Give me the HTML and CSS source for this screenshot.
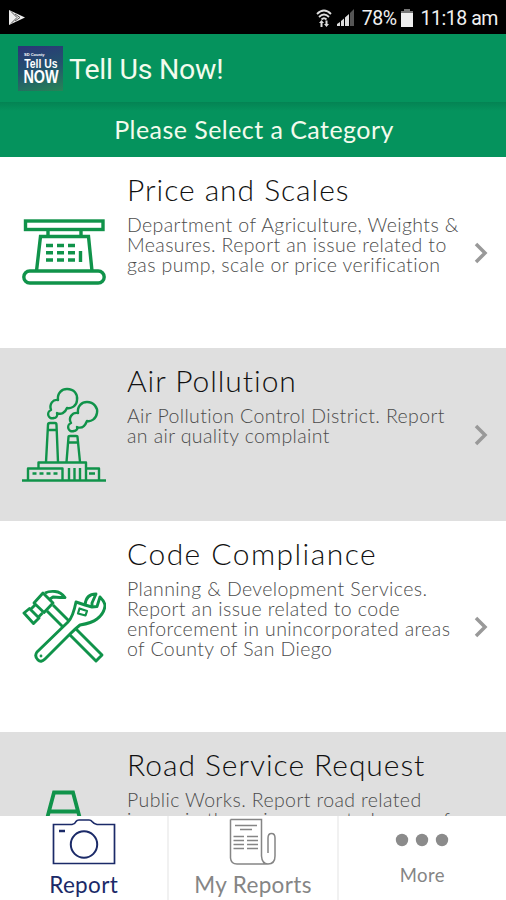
FILE: index.html
```
<!DOCTYPE html>
<html lang="en">
<head>
    <meta charset="UTF-8">
    <meta name="viewport" content="width=device-width, initial-scale=1.0">
    <title>Tell Us Now!</title>
    <link rel="stylesheet" href="styles.css">
</head>
<body>
    <div class="app">
        <div class="status-bar">
            <svg class="play" width="18" height="18" viewBox="0 0 18 18">
                <path d="M1 1 L17 8.5 L1 16 Z" fill="#eee"/>
                <path d="M3 2.500 L9 8.5 L3 14.500 M7 5 L12 8.500 L7 12" fill="none" stroke="#555" stroke-width="1"/>
            </svg>
            <svg class="wifi" width="16" height="19" viewBox="0 0 16 19">
                <g fill="none" stroke="#ddd" stroke-width="1.8">
                    <path d="M1 5 Q8 -2 15 5"/>
                    <path d="M3 8 Q8 3 13 8"/>
                    <path d="M5.5 10.5 Q8 8 10.5 10.5"/>
                </g>
                <path d="M3 14 L5.5 11 L8 14 H6.5 V18 H4.5 V14 Z M8 15 H9.5 V11.5 H11.5 V15 H13 L10.5 18 Z" fill="#ddd"/>
            </svg>
            <svg class="signal" width="18" height="18" viewBox="0 0 18 18">
                <path d="M0 17 V15 L3 13 V17 Z M4 17 V12 L7 9.500 V17 Z M8 17 V8.500 L12 5 V17 Z" fill="#ddd"/>
                <path d="M13 17 V4 L17 0 V17 Z" fill="#555"/>
            </svg>
            <span class="percent">78%</span>
            <svg class="battery" width="12" height="18" viewBox="0 0 12 18">
                <path d="M3 0 H9 V2 H12 V4 H0 V2 H3 Z" fill="#777"/>
                <path d="M0 4 H12 V18 H0 Z" fill="#eee"/>
            </svg>
            <span class="time">11:18 am</span>
        </div>

        <header class="header">
            <div class="logo">
                <span class="logo-small">SD County</span>
                <span class="logo-mid">Tell Us</span>
                <span class="logo-big">NOW</span>
            </div>
            <h1>Tell Us Now!</h1>
        </header>
        <div class="subheader">Please Select a Category</div>

        <ul class="categories">
            <li>
                <svg class="icon" width="84" height="96" viewBox="0 0 84 96">
                    <g fill="none" stroke="#10934a" stroke-width="3.400">
                        <rect x="3.500" y="16" width="77.500" height="8.500"/>
                        <path d="M26 25 V31 M59 25 V31"/>
                        <path d="M14.500 66 L18.500 31.500 H66.500 L70 66"/>
                        <rect x="1.800" y="66" width="80.400" height="12" rx="6"/>
                        <path d="M24 40.500 h7 m4 0 h7 m4 0 h7 M24 47.800 h7 m4 0 h7 m4 0 h7 M24 55 h7 m4 0 h7 m4 0 h7 M58.500 46 v11"/>
                    </g>
                </svg>
                <div class="text">
                    <h2>Price and Scales</h2>
                    <p>Department of Agriculture, Weights &amp;<br>Measures. Report an issue related to<br>gas pump, scale or price verification</p>
                </div>
                <svg class="arrow" width="14" height="22" viewBox="0 0 14 22"><path d="M2 2 L11 11 L2 20"/></svg>
            </li>
            <li>
                <svg class="icon" width="84" height="96" viewBox="0 0 84 96">
                    <g fill="none" stroke="#10934a" stroke-width="2.400" stroke-linejoin="round">
                        <path d="M0 93.500 H84"/>
                        <path d="M6 93 V81.500 H40.500 V93 M16.500 81 V75.500 H64 V93 M64 81.500 H77 V93"/>
                        <path d="M24 75 L26 38 Q26 36 28 36 H33 Q34.500 36 34.500 38 L36 75 M26 43 H34.500"/>
                        <path d="M44.500 75 L46.500 50 Q46.500 49 48 49 H54 Q55.500 49 55.500 50 L58 75 M46.500 55.500 H55.500"/>
                        <path d="M10.500 86.500 h4 m3 0 h4 m3 0 h4 m3 0 h4 M67 86.500 h6 M47 81 V93 M52.500 81 V93 M58 81 V93"/>
                        <path d="M32 31 C26 33 24 25 29 23 C27 17 31 12 36 13 C35 6 40 2 45 2 C52 2 56 7 55 13 C55 19 49 22 45 21 C43 26 39 28 35 26 C36 29 34 31 32 31 Z"/>
                        <path d="M52 44 C46 46 44 38 49 36 C46 31 50 25 56 26 C55 19 60 15 65 15 C72 15 76 21 75 26 C74 32 69 35 65 34 C63 39 60 42 55 40 C56 42 54 44 52 44 Z"/>
                    </g>
                </svg>
                <div class="text">
                    <h2>Air Pollution</h2>
                    <p>Air Pollution Control District. Report<br>an air quality complaint</p>
                </div>
                <svg class="arrow" width="14" height="22" viewBox="0 0 14 22"><path d="M2 2 L11 11 L2 20"/></svg>
            </li>
            <li>
                <svg class="icon" width="84" height="96" viewBox="0 0 84 96">
                    <g fill="none" stroke="#10934a" stroke-width="2.900" stroke-linejoin="round">
                        <!-- hammer -->
                        <path d="M31 26 L47 42 M25 32 L41 48 M54 50 L80 76 L74 82 L47 55"/>
                        <path d="M21 14 L31 24 L22 33.500 L12 24 Z"/>
                        <path d="M23 14 Q27 12 33 12.500 Q39 13 43 18.500 H38 L31 18 L28 20"/>
                        <path d="M2 34 L7.500 29.500 L17 39 L11.500 44.500 Z M9 30 L13 26 M16.500 38 L20.500 34"/>
                        <!-- wrench -->
                        <path d="M15 73 L46 43 Q51 38 54 23 L63 26 L70 28 L75 27.500 L78 18 Q83 23 83 27 Q82 35 75 40 Q70 44 58 46 Q53 50 48 55 L23 80 Q19 84 16 81 Q12 77 15 73 Z"/>
                        <path d="M63 26 Q64 15 74 15 L70 24 V28"/>
                        <path d="M57.500 29.500 L65 32 L63.500 36.500 L56 34.500 Z" stroke-width="2.200"/>
                        <circle cx="19" cy="77" r="0.800" stroke-width="1.200"/>
                    </g>
                </svg>
                <div class="text">
                    <h2 class="wide">Code Compliance</h2>
                    <p>Planning &amp; Development Services.<br>Report an issue related to code<br>enforcement in unincorporated areas<br>of County of San Diego</p>
                </div>
                <svg class="arrow" width="14" height="22" viewBox="0 0 14 22"><path d="M2 2 L11 11 L2 20"/></svg>
            </li>
            <li>
                <svg class="icon" width="84" height="96" viewBox="0 0 84 96">
                    <g fill="none" stroke="#10934a" stroke-width="3.800">
                        <path d="M22 50 L32 12.500 H51 L61 50 M27 31.500 H56"/>
                        <path d="M2 84 H82 M12 84 L22 50 H61 L71 84"/>
                    </g>
                </svg>
                <div class="text">
                    <h2>Road Service Request</h2>
                    <p>Public Works. Report road related<br>issues in the unincorporated areas of<br>County of San Diego</p>
                </div>
                <svg class="arrow" width="14" height="22" viewBox="0 0 14 22"><path d="M2 2 L11 11 L2 20"/></svg>
            </li>
        </ul>

        <nav class="tabs">
            <a class="tab active">
                <svg width="64" height="48" viewBox="0 0 64 48">
                    <g fill="none" stroke="#1b2a68" stroke-width="1.700">
                        <path d="M1.500 6.500 H20 Q23 6 24 3.500 Q25 2 27 2 H37 Q39 2 40 3.500 Q42 6 45 6.500 H62.500 V45.500 H1.500 Z"/>
                        <circle cx="32" cy="26.500" r="13.200" stroke-width="2"/>
                        <path d="M7 13 H13" stroke-width="2.500"/>
                    </g>
                </svg>
                <span>Report</span>
            </a>
            <a class="tab">
                <svg width="48" height="48" viewBox="0 0 48 48">
                    <g fill="none" stroke="#858585" stroke-width="1.500">
                        <path d="M1.500 1.500 H32.500 V38 Q33 46 39 46 Q46 46 46 38 V20 Q46 15.500 42.500 15.500 Q39 15.500 39 20 V35 M1.500 1.500 V40 Q2 46 8 46 H39"/>
                        <path d="M6 7.500 H28 M11 11.500 H23 M4.500 18.500 H15 M4.500 22.500 H15 M4.500 26.500 H15 M4.500 30.500 H15 M18 18.500 H29 M18 22.500 H29 M18 26.500 H29 M18 30.500 H29"/>
                    </g>
                </svg>
                <span>My Reports</span>
            </a>
            <a class="tab more">
                <svg width="54" height="14" viewBox="0 0 54 14">
                    <circle cx="7" cy="7" r="6.200" fill="#8b8b8b"/>
                    <circle cx="27" cy="7" r="6.200" fill="#8b8b8b"/>
                    <circle cx="47" cy="7" r="6.200" fill="#8b8b8b"/>
                </svg>
                <span>More</span>
            </a>
        </nav>
    </div>
</body>
</html>
```
FILE: styles.css
```
*,
*::after,
*::before {
    box-sizing: border-box;
}
body {
    margin: 0;
    font-family: Lato, "Open Sans", sans-serif;
    background: #fff;
}
.app {
    display: flex;
    flex-direction: column;
    height: 900px;
    overflow: hidden;
}
.status-bar {
    display: flex;
    flex-shrink: 0;
    align-items: center;
    height: 34px;
    padding: 2px 8px 0;
    background: #000;
    color: #f0f0f0;
    font-family: Roboto, sans-serif;
    font-size: 19.5px;
    letter-spacing: -0.45px;
    white-space: nowrap;
}
.wifi {
    margin-left: auto;
    margin-right: 5px;
}
.signal {
    margin-right: 7px;
}
.battery {
    margin: 0 7px 0 5px;
}
.header {
    display: flex;
    flex-shrink: 0;
    align-items: center;
    height: 68px;
    padding: 0 18px;
    background: #05935d;
    color: #f3fbed;
}
.header h1 {
    margin: 2px 0 0 6px;
    font-family: Roboto, sans-serif;
    font-size: 28.5px;
    font-weight: 400;
    letter-spacing: -0.25px;
}
.logo {
    display: flex;
    flex-direction: column;
    align-items: center;
    width: 45px;
    height: 45px;
    padding-top: 6px;
    background: linear-gradient(165deg, #2a3876 5%, #23526e 50%, #268556);
    color: #fff;
    font-family: "Liberation Sans", sans-serif;
    font-weight: bold;
    white-space: nowrap;
}
.logo-small {
    align-self: flex-start;
    margin-left: 6px;
    font-size: 4px;
    line-height: 5px;
}
.logo-mid {
    font-size: 13px;
    line-height: 13px;
    transform: scaleX(0.8);
}
.logo-big {
    font-size: 18px;
    line-height: 14px;
    transform: scaleX(0.8);
}
.subheader {
    flex-shrink: 0;
    height: 55px;
    background: linear-gradient(#048353, #05935d 9px);
    color: #f3fbed;
    font-size: 25px;
    line-height: 55px;
    text-align: center;
    letter-spacing: 0.45px;
    padding-left: 2px;
}
.categories {
    flex: 1;
    min-height: 0;
    margin: 0;
    padding: 0;
    overflow: hidden;
    list-style: none;
}
.categories li {
    display: flex;
    align-items: center;
    min-height: 173px;
    padding: 0 18px 0 22px;
}
.categories li:nth-child(even) {
    background: #dfdfdf;
}
.icon {
    flex-shrink: 0;
}
.text {
    flex: 1;
    align-self: flex-start;
    padding: 14px 0 73px 21px;
    white-space: nowrap;
}
.text h2 {
    margin: 0 0 8px;
    color: #111;
    font-size: 30px;
    font-weight: 300;
    line-height: 36px;
    letter-spacing: 0.95px;
}
.text h2.wide {
    letter-spacing: 1.45px;
}
.text p {
    margin: 0;
    color: #4c4c4c;
    font-size: 19.5px;
    font-weight: 300;
    line-height: 20px;
    letter-spacing: 0.39px;
}
.arrow path {
    fill: none;
    stroke: #999;
    stroke-width: 3.5px;
}
.tabs {
    display: flex;
    flex-shrink: 0;
    height: 84px;
    background: #fff;
}
.tab {
    display: flex;
    flex: 1;
    flex-direction: column;
    align-items: center;
    padding-top: 2px;
    color: #858585;
    font-size: 22.5px;
    line-height: 28px;
    letter-spacing: 0.35px;
}
.tab + .tab {
    border-left: 2px solid #f1f1f1;
}
.tab span {
    margin-top: 5px;
}
.tab.active {
    color: #1b2a68;
}
.tab.more {
    padding-top: 17px;
    font-size: 18.5px;
}
.tab.more span {
    margin-top: 14px;
}
```
